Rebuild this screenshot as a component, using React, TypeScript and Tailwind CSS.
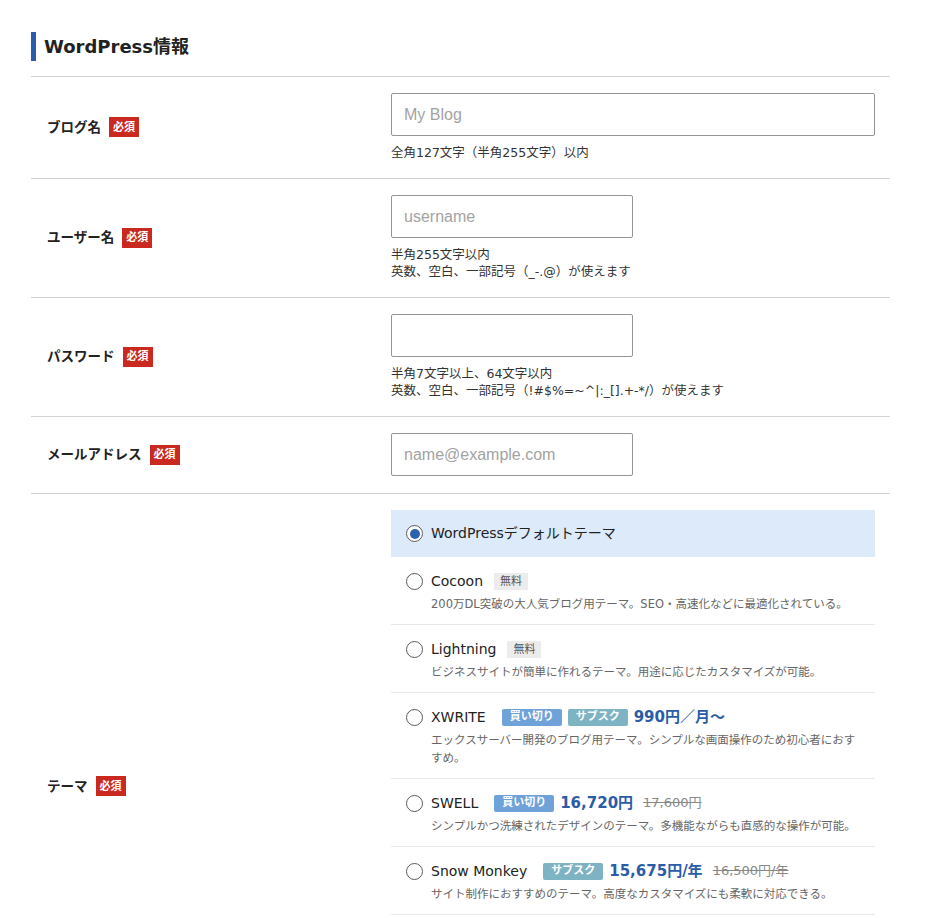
import React from 'react';

type Theme = {
  name: string;
  desc: string;
  free?: boolean;
  buy?: boolean;
  sub?: boolean;
  price?: string;
  old?: string;
  checked?: boolean;
};

const themes: Theme[] = [
  { name: 'WordPressデフォルトテーマ', desc: '', checked: true },
  { name: 'Cocoon', free: true, desc: '200万DL突破の大人気ブログ用テーマ。SEO・高速化などに最適化されている。' },
  { name: 'Lightning', free: true, desc: 'ビジネスサイトが簡単に作れるテーマ。用途に応じたカスタマイズが可能。' },
  { name: 'XWRITE', buy: true, sub: true, price: '990円／月〜', desc: 'エックスサーバー開発のブログ用テーマ。シンプルな画面操作のため初心者におすすめ。' },
  { name: 'SWELL', buy: true, price: '16,720円', old: '17,600円', desc: 'シンプルかつ洗練されたデザインのテーマ。多機能ながらも直感的な操作が可能。' },
  { name: 'Snow Monkey', sub: true, price: '15,675円/年', old: '16,500円/年', desc: 'サイト制作におすすめのテーマ。高度なカスタマイズにも柔軟に対応できる。' },
];

const font = { fontFamily: '"DejaVu Sans", "Noto Sans CJK JP", sans-serif' };

const Required = () => (
  <span className="ml-2 inline-flex h-[20px] items-center bg-[#c9291f] px-[4px] text-[11px] font-bold leading-none text-white">必須</span>
);

const Radio = ({ checked }: { checked?: boolean }) => (
  <span className="flex h-[17px] w-[17px] shrink-0 items-center justify-center rounded-full border border-[#5c5c5c] bg-white">
    {checked && <span className="h-[10px] w-[10px] rounded-full bg-[#2b62ad]" />}
  </span>
);

const Field = ({ placeholder, wide }: { placeholder?: string; wide?: boolean }) => (
  <input
    type="text"
    placeholder={placeholder}
    className={`${wide ? 'w-[484px]' : 'w-[242px]'} h-[43px] rounded-[2px] border border-[#959595] px-3 text-[16px] text-[#333] placeholder:text-[#a3a3a3] focus:outline-none`}
    style={{ fontFamily: '"Liberation Sans", Arial, sans-serif' }}
  />
);

const Row = ({ label, children, last }: { label: string; children: React.ReactNode; last?: boolean }) => (
  <div className={`flex ${last ? '' : 'border-b border-[#d2d2d2]'} pb-[17px] pt-4`}>
    <div className="flex w-[360px] shrink-0 items-center pl-4">
      <span className="text-[13.5px] font-bold text-[#222]">{label}</span>
      <Required />
    </div>
    <div className={`w-[484px] ${last ? 'min-h-[552px]' : ''}`}>{children}</div>
  </div>
);

const Help = ({ lines }: { lines: string[] }) => (
  <div className="mt-2 text-[12.5px] leading-[17px] text-[#333]">
    {lines.map(l => <div key={l}>{l}</div>)}
  </div>
);

const ThemeItem = ({ t }: { t: Theme }) => {
  if (t.checked) {
    return (
      <div className="flex h-[47px] items-center gap-2 bg-[#dceafa] px-[15px]">
        <Radio checked />
        <span className="text-[14px] text-[#222]">{t.name}</span>
      </div>
    );
  }
  return (
    <div className="border-b border-[#e8e8e8] pb-[11px] pl-[15px] pr-[10px] pt-[14px]">
      <div className="flex h-[20px] items-center">
        <Radio />
        <span className="ml-2 text-[14px] text-[#222]">{t.name}</span>
        {t.free && <span className="ml-[11px] bg-[#ececec] px-[6px] py-[2px] text-[11px] leading-[13px] text-[#555]">無料</span>}
        {(t.buy || t.sub) && (
          <span className="ml-4 flex items-center gap-[6px]">
            {t.buy && <span className="flex h-[17px] items-center rounded-[2px] bg-[#6fa2d9] px-[8px] text-[11px] font-bold text-white">買い切り</span>}
            {t.sub && <span className="flex h-[17px] items-center rounded-[2px] bg-[#7db3c2] px-[8px] text-[11px] font-bold text-white">サブスク</span>}
          </span>
        )}
        {t.price && <span className="ml-[6px] text-[15px] font-bold text-[#2a5ca8]">{t.price}</span>}
        {t.old && <span className="ml-[10px] text-[13px] text-[#888] line-through">{t.old}</span>}
      </div>
      <div className="mt-[4px] pl-[25px] text-[11.5px] leading-[18px] text-[#666]">{t.desc}</div>
    </div>
  );
};

export default function App() {
  return (
    <div className="min-h-screen bg-white text-[#222]" style={font}>
      <div className="ml-[31px] w-[859px] pt-[32px]">
        <h2 className="flex h-[29px] items-center border-l-[5px] border-[#2b5ea8] pl-[8px] text-[18px] font-bold text-[#222]">WordPress情報</h2>
        <div className="mt-[15px] border-t border-[#d2d2d2]">
          <Row label="ブログ名">
            <Field placeholder="My Blog" wide />
            <Help lines={['全角127文字（半角255文字）以内']} />
          </Row>
          <Row label="ユーザー名">
            <Field placeholder="username" />
            <Help lines={['半角255文字以内', '英数、空白、一部記号（_-.@）が使えます']} />
          </Row>
          <Row label="パスワード">
            <Field />
            <Help lines={['半角7文字以上、64文字以内', '英数、空白、一部記号（!#$%=~^|:_[].+-*/）が使えます']} />
          </Row>
          <Row label="メールアドレス">
            <Field placeholder="name@example.com" />
          </Row>
          <Row label="テーマ" last>
            <div>
              {themes.map(t => <ThemeItem key={t.name} t={t} />)}
            </div>
          </Row>
        </div>
      </div>
    </div>
  );
}
